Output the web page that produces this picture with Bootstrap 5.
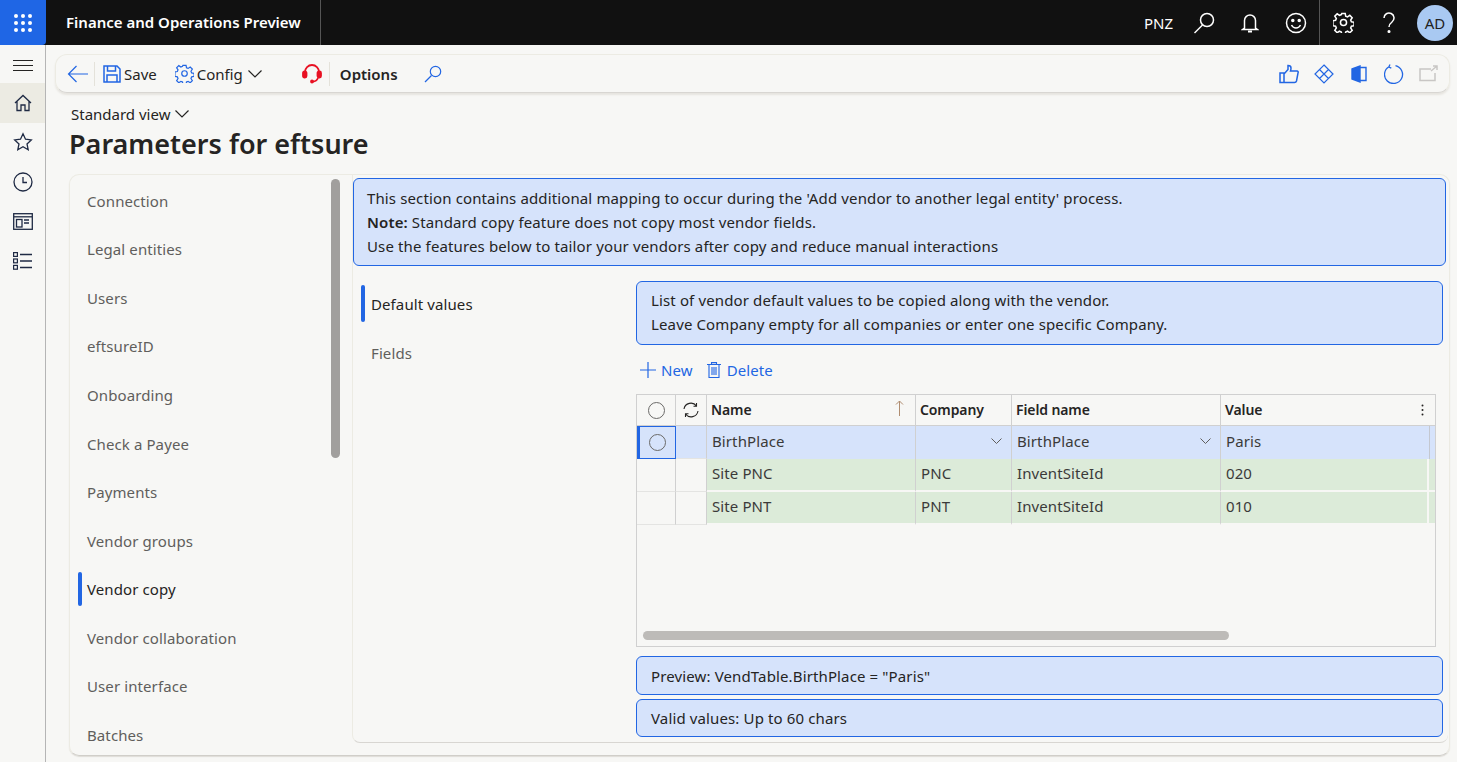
<!DOCTYPE html>
<html lang="en"><head><meta charset="utf-8"><title>Parameters for eftsure</title>
<link href="https://cdn.jsdelivr.net/npm/bootstrap@5.3.0/dist/css/bootstrap.min.css" rel="stylesheet">
<style>
html,body{height:762px;overflow:hidden}
body{background:#f7f7f5;color:#252423;font-family:"Noto Sans",sans-serif;font-size:15px;line-height:20px}
svg{display:block;fill:none;stroke:currentColor;flex:none}
.topbar{height:45px;background:#111;color:#fff}
.waffle{width:46px;height:45px;background:#1f66e5;border-radius:0 0 4px 0}
.apptitle{width:275px;height:45px;padding:0 0 2px 20px;border-right:1px solid #555;font-size:15px;font-weight:600}
.topicon{width:46px;height:45px}
.topdiv{width:1px;height:45px;background:#555}
.avatar{width:36px;height:36px;border-radius:50%;background:#a9c9f2;color:#222;font-size:15px;margin:0 4px 0 5px}
.body-row{height:717px}
.leftnav{width:46px;border-right:1px solid #b5b5b5}
.leftitem{height:39.5px;width:45px;color:#1f2a44}
.leftitem.on{background:#ecebe3}
.burger{height:38px;padding-top:2px}
.content{width:1411px;padding:9px 0 0 9px}
.actionbar{height:39px;width:1395px;border:1px solid #ecebe3;border-bottom-color:#d8d6d2;border-radius:12px;padding:0 11px 0 11px;box-shadow:0 2px 2px #e6e4df;color:#252423}
.blue{color:#2266e3}
.paleicon{color:#c8c6c4}
.sep{width:1px;height:24px;background:#e4e2da}
.viewname{margin:11px 0 0 16px;height:20px}
.pagetitle{margin:1px 0 0 14px;font-size:27px;line-height:38px;font-weight:600;color:#252423}
.mainpanel{margin:11px 0 0 14px;width:1381px;height:582px;border:1px solid #ecebe3;border-bottom-color:#d0cec9;border-radius:10px;box-shadow:0 1px 1px #dedcd7}
.tabcol{width:270px;padding-top:2px;overflow:hidden}
.tabitem{height:48.55px;flex:none;padding:0 0 1px 17px;color:#605e5c;letter-spacing:.1px}
.tabitem.on{color:#252423}
.tabitem.on::before{content:"";position:absolute;left:8px;top:7px;width:4px;height:34px;background:#2266e3;border-radius:2px}
.vscroll{width:9px;height:279px;margin:4px 0 0 -9px;background:#a19f9d;border-radius:5px;flex:none}
.rightpanel{margin-left:12px;width:1096px;height:568px;padding-top:3px;border-bottom:1px solid #d8d6d2;border-left:1px solid #ecebe3;border-radius:0 0 8px 8px}
.infobox{background:#d6e3fb;border:1px solid #2266e3;border-radius:6px;padding:0 14px;color:#252423;letter-spacing:.13px}
.toplong{height:88px;width:1093px;padding:7px 13px 0;line-height:24px}
.sub-row{margin-top:15px}
.subtabs{width:283px;padding-left:8px;margin-top:-1px}
.subtab{height:49px;padding:0 0 2px 10px;color:#605e5c;letter-spacing:.1px;position:relative}
.subtab.on{color:#252423}
.subtab.on::before{content:"";position:absolute;left:0;top:5px;width:4px;height:37px;background:#2266e3;border-radius:2px}
.grid-side{width:807px}
.box2{height:64px;padding-top:6px;line-height:24px}
.cmdbar{height:49px;padding:1px 0 0 4px;color:#2266e3;letter-spacing:.1px}
.gridwrap{width:800px;height:253px;border:1px solid #d0d0d0;position:relative}
.dgrid{table-layout:fixed;width:798px;border-collapse:separate;border-spacing:0}
.dgrid th{height:31px;font-weight:600;font-size:14px;border-bottom:1px solid #d0d0d0;border-right:1px solid #d0d0d0;padding:0 4px;letter-spacing:-.1px;position:relative;color:#252423}
.dgrid th:last-child,.dgrid td:last-child{border-right:0}
.dgrid td{height:33px;padding:0 5px 3px;border-right:1px solid #d0d0d0;letter-spacing:.1px;color:#3b3a39;position:relative}
.dgrid .sel td.dat{background:#d6e3fb}
.dgrid .green td.dat{background:#dcebd9;border-bottom:2px solid #f7f7f5}
.dgrid .green td.endcell{background:linear-gradient(to right,#dcebd9 calc(100% - 8px),#f7f7f5 calc(100% - 8px),#f7f7f5 calc(100% - 6px),#dcebd9 calc(100% - 6px))}
.dgrid .sel td.endcell{background:linear-gradient(to right,#d6e3fb calc(100% - 6px),#c4c8d0 calc(100% - 6px),#c4c8d0 calc(100% - 5px),#d6e3fb calc(100% - 5px))}
.dgrid .lead{border-bottom:1px solid #e4e4e2;padding:0}
.selcell{background:#d6e3fb;outline:1px solid #2266e3;outline-offset:-1px;border-left:3px solid #2266e3!important}
.radio{width:17px;height:17px;border:1px solid #6b6a68;border-radius:50%;display:block;margin:auto}
.chev{position:absolute;right:9px;top:12px;color:#605e5c}
.hscroll{position:absolute;left:6px;top:236px;width:586px;height:9px;background:#bdbbb8;border-radius:5px}
.box3{height:39px;padding-top:9px;margin-top:9px}
.box4{height:38px;padding-top:8px;margin-top:4px}
</style></head>
<body>
<header class="topbar d-flex align-items-center">
  <div class="waffle d-flex align-items-center justify-content-center">
    <svg width="20" height="20" viewBox="0 0 20 20" style="stroke:none;fill:#fff"><circle cx="3" cy="3" r="2"/><circle cx="10" cy="3" r="2"/><circle cx="17" cy="3" r="2"/><circle cx="3" cy="10" r="2"/><circle cx="10" cy="10" r="2"/><circle cx="17" cy="10" r="2"/><circle cx="3" cy="17" r="2"/><circle cx="10" cy="17" r="2"/><circle cx="17" cy="17" r="2"/></svg>
  </div>
  <div class="apptitle d-flex align-items-center">Finance and Operations Preview</div>
  <div class="ms-auto d-flex align-items-center">PNZ</div>
  <div class="topicon d-flex align-items-center justify-content-center ms-2">
    <svg width="22" height="22" viewBox="0 0 22 22" stroke-width="1.5"><circle cx="14" cy="8" r="6.500"/><path d="M9.500 13 1.500 21"/></svg></div>
  <div class="topicon d-flex align-items-center justify-content-center">
    <svg width="18" height="20" viewBox="0 0 18 20" stroke-width="1.5"><path d="M3.500 15V7.500a5.500 5.500 0 0 1 11 0V15l2 1.500h-15z"/><path d="M7 18.500h4" stroke-width="2"/></svg></div>
  <div class="topicon d-flex align-items-center justify-content-center">
    <svg width="22" height="22" viewBox="0 0 22 22" stroke-width="1.5"><circle cx="11" cy="11" r="9.500"/><path d="M6.500 13c1 2 2.700 3 4.500 3s3.500-1 4.500-3"/><circle cx="7.800" cy="8.500" r="1" fill="#fff"/><circle cx="14.200" cy="8.500" r="1" fill="#fff"/></svg></div>
  <div class="topdiv"></div>
  <div class="topicon d-flex align-items-center justify-content-center">
    <svg width="21" height="21" viewBox="0 0 22 22" stroke-width="1.600"><circle cx="11" cy="11" r="3.200"/><path d="M9.200 1.500h3.600l.5 2.800 1.900.8 2.400-1.600 2.500 2.500-1.600 2.400.8 1.900 2.800.5v3.600l-2.800.5-.8 1.900 1.600 2.400-2.500 2.500-2.400-1.600-1.900.8-.5 2.800H9.200l-.5-2.800-1.900-.8-2.400 1.600-2.500-2.500 1.600-2.400-.8-1.900-2.800-.5V9.200l2.800-.5.800-1.900-1.600-2.400 2.500-2.500 2.400 1.600 1.900-.8z"/></svg></div>
  <div class="topicon d-flex align-items-center justify-content-center">
    <svg width="14" height="22" viewBox="0 0 14 22" stroke-width="1.500"><path d="M2 6a5 5 0 1 1 8 4c-2 1.500-3 2.500-3 5"/><circle cx="7" cy="19.500" r=".8" fill="#fff"/></svg></div>
  <div class="avatar d-flex align-items-center justify-content-center">AD</div>
</header>
<div class="body-row d-flex">
  <nav class="leftnav d-flex flex-column">
    <div class="burger d-flex align-items-center justify-content-center"><svg width="20" height="11" viewBox="0 0 20 11"><path d="M0 .5h20M0 5.500h20M0 10.500h20"/></svg></div>
    <div class="leftitem on d-flex align-items-center justify-content-center"><svg width="18" height="18" viewBox="0 0 18 18" stroke-width="1.300"><path d="M1 9 9 1.500 17 9M3 7.500V16.500h4V11h4v5.500h4V7.500"/></svg></div>
    <div class="leftitem d-flex align-items-center justify-content-center"><svg width="20" height="20" viewBox="0 0 20 20" stroke-width="1.300"><path d="m10 1.800 2.500 5.400 5.800.7-4.300 4 1.200 5.800-5.200-3-5.200 3 1.200-5.800-4.300-4 5.800-.7z"/></svg></div>
    <div class="leftitem d-flex align-items-center justify-content-center"><svg width="20" height="20" viewBox="0 0 20 20" stroke-width="1.300"><circle cx="10" cy="10" r="9"/><path d="M10 5v5.500h4"/></svg></div>
    <div class="leftitem d-flex align-items-center justify-content-center"><svg width="20" height="17" viewBox="0 0 20 17" stroke-width="1.300"><rect x=".7" y=".7" width="18.600" height="15.600"/><path d="M1 3.800h18"/><rect x="3.500" y="6.500" width="5.500" height="7.500"/><path d="M11 7h5M11 10h5"/></svg></div>
    <div class="leftitem d-flex align-items-center justify-content-center"><svg width="20" height="18" viewBox="0 0 20 18" stroke-width="1.200"><rect x=".6" y=".6" width="3.800" height="3.800"/><rect x=".6" y="7" width="3.800" height="3.800"/><rect x=".6" y="13.400" width="3.800" height="3.800"/><path d="M7 2.500h12M7 9h12M7 15.500h12" stroke-width="1.500"/></svg></div>
  </nav>
  <main class="content">
    <div class="actionbar d-flex align-items-center">
      <svg class="blue" width="21" height="18" viewBox="0 0 21 18" stroke-width="1.200"><path d="M9.500 1 1.500 9l8 8M1.500 9H21"/></svg>
      <div class="sep" style="margin-left:6px"></div>
      <svg class="blue" style="margin-left:8px" width="18" height="18" viewBox="0 0 18 18" stroke-width="1.500"><path d="M1 1h13l3 3v13H1z"/><path d="M4.500 1v5h8V1M4 17v-7h10v7"/></svg>
      <span style="margin-left:3px">Save</span>
      <svg class="blue" style="margin-left:18px" width="19" height="19" viewBox="0 0 22 22" stroke-width="1.400"><circle cx="11" cy="11" r="3.200"/><path d="M9.200 1.500h3.600l.5 2.800 1.900.8 2.400-1.600 2.500 2.500-1.600 2.400.8 1.900 2.800.5v3.600l-2.800.5-.8 1.900 1.600 2.400-2.500 2.500-2.400-1.600-1.900.8-.5 2.800H9.200l-.5-2.800-1.900-.8-2.400 1.600-2.500-2.500 1.600-2.400-.8-1.900-2.800-.5V9.200l2.800-.5.800-1.900-1.600-2.400 2.500-2.500 2.400 1.600 1.900-.8z"/></svg>
      <span style="margin-left:3px">Config</span>
      <svg style="margin-left:5px" width="14" height="8" viewBox="0 0 14 8" stroke-width="1.200"><path d="m.5.500 6.500 6.500 6.500-6.500"/></svg>
      <svg style="margin-left:40px;color:#e81123" width="20" height="20" viewBox="0 0 20 20" stroke-width="1.800"><path d="M3 11V8a7 7 0 0 1 14 0v3"/><rect x="1" y="7.500" width="3.500" height="6" rx="1.500" fill="#e81123"/><rect x="15.500" y="7.500" width="3.500" height="6" rx="1.500" fill="#e81123"/><path d="M16 14c-1 2.500-3 3.500-5 3.500"/><circle cx="10" cy="17.500" r="1" fill="#e81123"/></svg>
      <div class="sep" style="margin-left:7px"></div>
      <span class="fw-semibold" style="margin-left:10px">Options</span>
      <svg class="blue" style="margin-left:26px" width="18" height="18" viewBox="0 0 18 18" stroke-width="1.200"><circle cx="11.500" cy="6.500" r="5.200"/><path d="M7.500 10.500 1 17"/></svg>
      <svg class="blue ms-auto" width="20" height="20" viewBox="0 0 20 20" stroke-width="1.500" style="margin-right:15px"><path d="M1 9h4v9.500H1zM5 10l4-4.500V1.500c2 0 3 1 3 2.500 0 1.500-.5 3-.5 3H18c1 0 1.500 1 1 2l-1.500 8c-.3 1-1 1.500-2 1.500H5"/></svg>
      <svg class="blue" width="20" height="20" viewBox="0 0 20 20" stroke-width="1.200" style="margin-right:17px"><path d="M10 1 19 10 10 19 1 10zM5.500 5.500 14.500 14.500M14.500 5.500 5.500 14.500"/></svg>
      <svg class="blue" width="16" height="18" viewBox="0 0 16 18" stroke-width="1.400" style="margin-right:17px"><path d="M1 4l8-3v16l-8-3z" fill="#2266e3"/><path d="M9 2.500h6v13H9"/></svg>
      <svg class="blue" width="20" height="20" viewBox="0 0 20 20" stroke-width="1.300" style="margin-right:15px"><path d="M11.500 1.700A9 9 0 1 1 5 2.700M6 .5 4.800 3l2.500 1.200"/></svg>
      <svg class="paleicon" width="19" height="17" viewBox="0 0 19 17" stroke-width="1.500"><path d="M12 4H1v11.500h15V8M12 6l6-5M14 1h4v4"/></svg>
    </div>
    <div class="viewname d-flex align-items-center">Standard view
      <svg style="margin-left:5px" width="14" height="8" viewBox="0 0 14 8" stroke-width="1.200"><path d="m.5.500 6.500 6.500 6.500-6.500"/></svg></div>
    <h1 class="pagetitle">Parameters for eftsure</h1>
    <section class="mainpanel d-flex">
      <div class="tabcol d-flex flex-column">
        <div class="tabitem position-relative d-flex align-items-center">Connection</div>
        <div class="tabitem position-relative d-flex align-items-center">Legal entities</div>
        <div class="tabitem position-relative d-flex align-items-center">Users</div>
        <div class="tabitem position-relative d-flex align-items-center">eftsureID</div>
        <div class="tabitem position-relative d-flex align-items-center">Onboarding</div>
        <div class="tabitem position-relative d-flex align-items-center">Check a Payee</div>
        <div class="tabitem position-relative d-flex align-items-center">Payments</div>
        <div class="tabitem position-relative d-flex align-items-center">Vendor groups</div>
        <div class="tabitem on position-relative d-flex align-items-center">Vendor copy</div>
        <div class="tabitem position-relative d-flex align-items-center">Vendor collaboration</div>
        <div class="tabitem position-relative d-flex align-items-center">User interface</div>
        <div class="tabitem position-relative d-flex align-items-center">Batches</div>
      </div>
      <div class="vscroll"></div>
      <div class="rightpanel">
        <div class="infobox toplong">This section contains additional mapping to occur during the 'Add vendor to another legal entity' process.<br><strong class="fw-semibold">Note:</strong> Standard copy feature does not copy most vendor fields.<br>Use the features below to tailor your vendors after copy and reduce manual interactions</div>
        <div class="sub-row d-flex">
          <div class="subtabs">
            <div class="subtab on d-flex align-items-center">Default values</div>
            <div class="subtab d-flex align-items-center">Fields</div>
          </div>
          <div class="grid-side">
            <div class="infobox box2">List of vendor default values to be copied along with the vendor.<br>Leave Company empty for all companies or enter one specific Company.</div>
            <div class="cmdbar d-flex align-items-center">
              <svg width="16" height="16" viewBox="0 0 16 16" stroke-width="1.200"><path d="M8 0v16M0 8h16"/></svg>
              <span style="margin-left:5px">New</span>
              <svg style="margin-left:14px" width="14" height="16" viewBox="0 0 14 16" stroke-width="1.100"><path d="M0 2.500h14M4.500 2.500V.6h5v1.900M2 2.500v13h10v-13M5 5v8M7 5v8M9 5v8"/></svg>
              <span style="margin-left:6px">Delete</span>
            </div>
            <div class="gridwrap">
              <table class="dgrid">
                <colgroup><col style="width:39px"><col style="width:31px"><col style="width:209px"><col style="width:96px"><col style="width:209px"><col></colgroup>
                <thead><tr>
                  <th class="p-0"><span class="radio"></span></th>
                  <th class="p-0"><svg class="mx-auto" width="16" height="16" viewBox="0 0 16 16" stroke-width="1.100"><path d="M1 7a7 7 0 0 1 12.500-3M15 9a7 7 0 0 1-12.500 3M13.500 1v3.200h-3M2.500 15v-3.200h3"/></svg></th>
                  <th>Name<svg class="position-absolute" style="right:11px;top:5px;color:#b08d70" width="9" height="16" viewBox="0 0 9 16"><path d="M4.500 16V1M1 4.500 4.500 1 8 4.500"/></svg></th>
                  <th>Company</th>
                  <th>Field name</th>
                  <th>Value<svg class="position-absolute" style="right:11px;top:9px;stroke:none;fill:#252423" width="3" height="12" viewBox="0 0 3 12"><circle cx="1.500" cy="1.500" r="1"/><circle cx="1.500" cy="6" r="1"/><circle cx="1.500" cy="10.500" r="1"/></svg></th>
                </tr></thead>
                <tbody>
                  <tr class="sel"><td class="lead selcell"><span class="radio"></span></td><td class="lead" style="background:#d6e3fb"></td><td class="dat">BirthPlace</td><td class="dat"><svg class="chev" width="11" height="7" viewBox="0 0 11 7"><path d="m.5.500 5 5 5-5"/></svg></td><td class="dat">BirthPlace<svg class="chev" width="11" height="7" viewBox="0 0 11 7"><path d="m.5.500 5 5 5-5"/></svg></td><td class="dat endcell">Paris</td></tr>
                  <tr class="green"><td class="lead"></td><td class="lead"></td><td class="dat">Site PNC</td><td class="dat">PNC</td><td class="dat">InventSiteId</td><td class="dat endcell">020</td></tr>
                  <tr class="green"><td class="lead"></td><td class="lead"></td><td class="dat">Site PNT</td><td class="dat">PNT</td><td class="dat">InventSiteId</td><td class="dat endcell">010</td></tr>
                </tbody>
              </table>
              <div class="hscroll"></div>
            </div>
            <div class="infobox box3">Preview: VendTable.BirthPlace = "Paris"</div>
            <div class="infobox box4">Valid values: Up to 60 chars</div>
          </div>
        </div>
      </div>
    </section>
  </main>
</div>
<script src="https://cdn.jsdelivr.net/npm/bootstrap@5.3.0/dist/js/bootstrap.bundle.min.js"></script>
</body></html>
